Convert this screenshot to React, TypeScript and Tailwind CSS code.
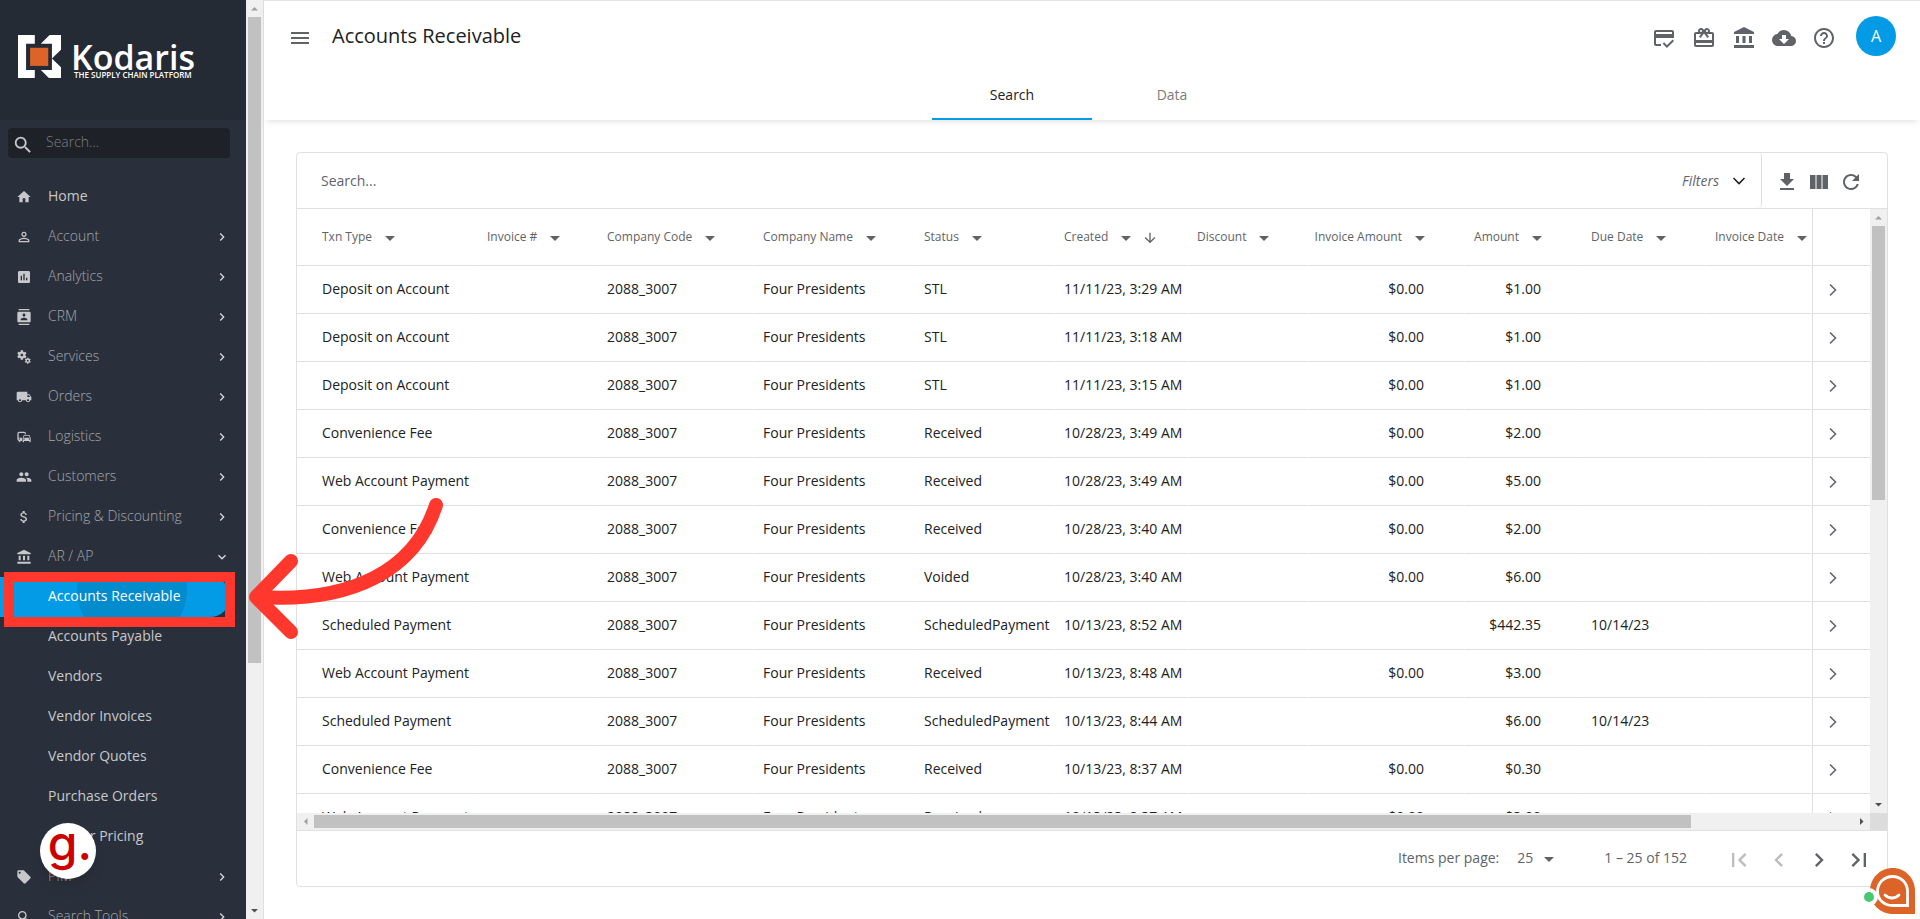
import React from 'react';
import {
  MdAccountBalance,
  MdArrowDownward,
  MdArrowDropDown,
  MdAssessment,
  MdAttachMoney,
  MdCardGiftcard,
  MdChevronLeft,
  MdChevronRight,
  MdCloudDownload,
  MdCommute,
  MdContacts,
  MdCreditScore,
  MdExpandMore,
  MdFileDownload,
  MdFirstPage,
  MdHelpOutline,
  MdHome,
  MdLastPage,
  MdLocalOffer,
  MdLocalShipping,
  MdMenu,
  MdMiscellaneousServices,
  MdPeople,
  MdPersonOutline,
  MdRefresh,
  MdSearch,
} from 'react-icons/md';

type Icon = React.ComponentType<{ className?: string }>;

type NavEntry = {
  label: string;
  icon?: Icon;
  expand?: 'right' | 'down';
  active?: boolean;
};

const nav: NavEntry[] = [
  { label: 'Home', icon: MdHome },
  { label: 'Account', icon: MdPersonOutline, expand: 'right' },
  { label: 'Analytics', icon: MdAssessment, expand: 'right' },
  { label: 'CRM', icon: MdContacts, expand: 'right' },
  { label: 'Services', icon: MdMiscellaneousServices, expand: 'right' },
  { label: 'Orders', icon: MdLocalShipping, expand: 'right' },
  { label: 'Logistics', icon: MdCommute, expand: 'right' },
  { label: 'Customers', icon: MdPeople, expand: 'right' },
  { label: 'Pricing & Discounting', icon: MdAttachMoney, expand: 'right' },
  { label: 'AR / AP', icon: MdAccountBalance, expand: 'down' },
  { label: 'Accounts Receivable', active: true },
  { label: 'Accounts Payable' },
  { label: 'Vendors' },
  { label: 'Vendor Invoices' },
  { label: 'Vendor Quotes' },
  { label: 'Purchase Orders' },
  { label: 'Vendor Pricing' },
  { label: 'PIM', icon: MdLocalOffer, expand: 'right' },
  { label: 'Search Tools', icon: MdSearch, expand: 'right' },
];

type Column = {
  title: string;
  width: string;
  right?: boolean;
  sorted?: boolean;
};

const columns: Column[] = [
  { title: 'Txn Type', width: 'w-[181px]' },
  { title: 'Invoice #', width: 'w-[120px]' },
  { title: 'Company Code', width: 'w-[156px]' },
  { title: 'Company Name', width: 'w-[161px]' },
  { title: 'Status', width: 'w-[140px]' },
  { title: 'Created', width: 'w-[133px]', sorted: true },
  { title: 'Discount', width: 'w-[120px]' },
  { title: 'Invoice Amount', width: 'w-[157px]', right: true },
  { title: 'Amount', width: 'w-[117px]', right: true },
  { title: 'Due Date', width: 'w-[124px]' },
  { title: 'Invoice Date', width: '' },
];

type Txn = {
  type: string;
  status: string;
  created: string;
  invoiceAmount?: string;
  amount: string;
  due?: string;
};

const rows: Txn[] = [
  { type: 'Deposit on Account', status: 'STL', created: '11/11/23, 3:29 AM', invoiceAmount: '$0.00', amount: '$1.00' },
  { type: 'Deposit on Account', status: 'STL', created: '11/11/23, 3:18 AM', invoiceAmount: '$0.00', amount: '$1.00' },
  { type: 'Deposit on Account', status: 'STL', created: '11/11/23, 3:15 AM', invoiceAmount: '$0.00', amount: '$1.00' },
  { type: 'Convenience Fee', status: 'Received', created: '10/28/23, 3:49 AM', invoiceAmount: '$0.00', amount: '$2.00' },
  { type: 'Web Account Payment', status: 'Received', created: '10/28/23, 3:49 AM', invoiceAmount: '$0.00', amount: '$5.00' },
  { type: 'Convenience Fee', status: 'Received', created: '10/28/23, 3:40 AM', invoiceAmount: '$0.00', amount: '$2.00' },
  { type: 'Web Account Payment', status: 'Voided', created: '10/28/23, 3:40 AM', invoiceAmount: '$0.00', amount: '$6.00' },
  { type: 'Scheduled Payment', status: 'ScheduledPayment', created: '10/13/23, 8:52 AM', amount: '$442.35', due: '10/14/23' },
  { type: 'Web Account Payment', status: 'Received', created: '10/13/23, 8:48 AM', invoiceAmount: '$0.00', amount: '$3.00' },
  { type: 'Scheduled Payment', status: 'ScheduledPayment', created: '10/13/23, 8:44 AM', amount: '$6.00', due: '10/14/23' },
  { type: 'Convenience Fee', status: 'Received', created: '10/13/23, 8:37 AM', invoiceAmount: '$0.00', amount: '$0.30' },
  { type: 'Web Account Payment', status: 'Received', created: '10/13/23, 8:37 AM', invoiceAmount: '$0.00', amount: '$3.00' },
];

const Logo = () => (
  <div className="flex h-[120px] shrink-0 bg-[#252b35] pl-[18px] pt-[35px] text-white">
    <svg viewBox="54 46 128 128" className="h-[43px] w-[43px]">
      <path d="M54 46H104V72H78V150H104V174H54Z" fill="#fff" />
      <path
        d="M122 72L148 46H182V90L155 116L182 142V174H146L122 150H155V72Z"
        fill="#fff"
      />
      <path d="M90 84H144V138H90Z" fill="#dc6428" />
    </svg>
    <div className="ml-[10px] pt-2">
      <div className="font-['Open_Sans'] text-[34px] font-semibold leading-7">
        Kodaris
      </div>
      <div className="ml-[3px] whitespace-nowrap font-['Open_Sans'] text-[8px] font-semibold leading-[8px]">
        THE SUPPLY CHAIN PLATFORM
      </div>
    </div>
  </div>
);

const Triangle = ({ dir, dim }: { dir: 'up' | 'down' | 'left' | 'right'; dim?: boolean }) => {
  const paths = {
    up: 'M5 10.5L8.5 7L12 10.5Z',
    down: 'M5 7L8.5 10.5L12 7Z',
    left: 'M10.5 5L7 8.5L10.5 12Z',
    right: 'M7 5L10.5 8.5L7 12Z',
  };
  return (
    <svg viewBox="0 0 17 17" className="h-[17px] w-[17px] shrink-0">
      <path d={paths[dir]} fill={dim ? '#a0a0a0' : '#505050'} />
    </svg>
  );
};

const NavItem = ({ label, icon: ItemIcon, expand, active }: NavEntry) => (
  <li className="relative h-10">
    <a
      href="#"
      className={`relative flex h-10 w-[230px] items-center overflow-hidden text-sm ${
        active ? 'rounded-r-[20px] bg-[#039be5] text-white' : ''
      } ${expand ? 'font-light text-[#a3a7ad]' : 'text-[#c6c8cb]'}`}
    >
      {active && (
        <span className="absolute -top-[42px] left-[77px] h-[110px] w-[110px] rounded-full bg-black/10" />
      )}
      <span className="flex w-12 shrink-0 pl-4">
        {ItemIcon && <ItemIcon className="h-4 w-4 text-[#c6c8cb]" />}
      </span>
      <span className="relative flex-1 pb-[2px] leading-5">{label}</span>
      {expand === 'right' && (
        <MdChevronRight className="h-4 w-4 text-[#d6d7d9]" />
      )}
      {expand === 'down' && <MdExpandMore className="h-4 w-4 text-[#d6d7d9]" />}
    </a>
    {active && (
      <span className="absolute -top-[5px] left-1 z-10 h-[55px] w-[231px] border-[10px] border-[#ff372c]" />
    )}
  </li>
);

const Sidebar = () => (
  <aside className="flex h-screen w-[246px] shrink-0 flex-col overflow-hidden bg-[#2a303b]">
    <Logo />
    <label className="ml-2 mt-2 flex h-[30px] w-[222px] shrink-0 items-center rounded bg-[#1e2127]">
      <MdSearch className="ml-1 mt-1 h-[22px] w-[22px] text-[#c6c8cb]" />
      <input
        aria-label="Search menu"
        placeholder="Search..."
        className="ml-3 w-40 bg-transparent pb-[2px] text-sm font-light text-white outline-none placeholder:text-[#7b7e82]"
      />
    </label>
    <ul className="mt-[19px]">
      {nav.map((item) => (
        <NavItem key={item.label} {...item} />
      ))}
    </ul>
  </aside>
);

const PageScrollbar = () => (
  <div className="flex h-screen w-[18px] shrink-0 flex-col border-r border-[#e0e0e0] bg-[#f0f0f0]">
    <Triangle dir="up" dim />
    <div className="flex flex-1 flex-col">
      <div className="ml-[2px] h-[73%] w-[13px] bg-[#c1c1c1]" />
    </div>
    <Triangle dir="down" />
  </div>
);

const headerIcons: { label: string; icon: Icon }[] = [
  { label: 'Payments', icon: MdCreditScore },
  { label: 'Rewards', icon: MdCardGiftcard },
  { label: 'Bank', icon: MdAccountBalance },
  { label: 'Downloads', icon: MdCloudDownload },
  { label: 'Help', icon: MdHelpOutline },
];

const Header = () => (
  <header className="relative flex h-[120px] shrink-0 flex-col border-t border-[#e4e4e4] bg-white shadow-[0_4px_6px_-3px_rgba(0,0,0,0.14)]">
    <div className="flex h-[70px] items-center pl-6 pr-6">
      <button aria-label="Menu" className="mt-1">
        <MdMenu className="h-6 w-6 text-[#5f6368]" />
      </button>
      <h1 className="ml-5 flex-1 text-xl text-[#202124]">Accounts Receivable</h1>
      <div className="mt-[3px] flex gap-4 text-[#5f6368]">
        {headerIcons.map(({ label, icon: HeaderIcon }) => (
          <button key={label} aria-label={label}>
            <HeaderIcon className="h-6 w-6" />
          </button>
        ))}
      </div>
      <button className="ml-5 h-10 w-10 rounded-full bg-[#039be5] text-base text-white">
        A
      </button>
    </div>
    <div className="flex flex-1 justify-center text-sm">
      <button className="w-40 border-b-2 border-[#039be5] text-[#202124]">
        Search
      </button>
      <button className="w-40 border-b-2 border-transparent text-[#7c7c7c]">
        Data
      </button>
    </div>
  </header>
);

const Toolbar = () => (
  <div className="flex h-[56px] shrink-0 border-b border-[#e0e0e0] text-[#5f6368]">
    <div className="flex flex-1 items-center rounded-r border-r border-[#e0e0e0] pl-6">
      <input
        aria-label="Search transactions"
        placeholder="Search..."
        className="flex-1 text-sm outline-none placeholder:text-[#5f6368]"
      />
      <button className="mr-[10px] flex items-center text-sm italic">
        Filters
        <svg viewBox="0 0 24 24" className="ml-2 h-6 w-6 text-[#202124]">
          <path d="M6.500 9L12 14.500L17.500 9" fill="none" stroke="currentColor" strokeWidth="1.600" />
        </svg>
      </button>
    </div>
    <div className="flex items-center gap-2 pl-[13px] pr-6 pt-[2px]">
      <button aria-label="Download">
        <MdFileDownload className="h-6 w-6" />
      </button>
      <button aria-label="Columns">
        <svg viewBox="0 0 24 24" className="h-6 w-6" fill="currentColor">
          <path d="M9.500 19h5V5h-5v14zM3 19h5.500V5H3v14zM15.500 5v14H21V5h-5.500z" />
        </svg>
      </button>
      <button aria-label="Refresh">
        <MdRefresh className="h-6 w-6" />
      </button>
    </div>
  </div>
);

const cell = 'border-b border-r border-b-[#e0e0e0] border-r-white pb-[2px] pl-[9px] first:pl-[25px]';

const Table = () => (
  <table className="w-full table-fixed border-separate border-spacing-0 whitespace-nowrap text-sm text-[#202124]">
    <thead>
      <tr className="h-[57px] text-xs text-[#5f6368]">
        {columns.map(({ title, width, right, sorted }) => (
          <th key={title} className={`${cell} ${width} ${right ? 'pr-[32px]' : ''} font-normal`}>
            <div className={`flex items-center pt-1 ${right ? 'justify-end' : ''}`}>
              <span className="pb-[2px]">{title}</span>
              <MdArrowDropDown className="ml-[6px] h-6 w-6 shrink-0" />
              {sorted && <MdArrowDownward className="ml-1 h-4 w-4 shrink-0" />}
            </div>
          </th>
        ))}
        <th aria-label="Open" className="w-[58px] border-b border-l border-[#e0e0e0]" />
      </tr>
    </thead>
    <tbody>
      {rows.map((row, i) => (
        <tr key={i} className="h-12">
          <td className={cell}>{row.type}</td>
          <td className={cell} />
          <td className={cell}>2088_3007</td>
          <td className={cell}>Four Presidents</td>
          <td className={cell}>{row.status}</td>
          <td className={cell}>{row.created}</td>
          <td className={cell} />
          <td className={`${cell} pr-10 text-right`}>{row.invoiceAmount}</td>
          <td className={`${cell} pr-10 text-right`}>{row.amount}</td>
          <td className={cell}>{row.due}</td>
          <td className={cell} />
          <td className="border-b border-l border-[#e0e0e0] pl-2">
            <button aria-label="Open row" className="block">
              <svg viewBox="0 0 24 24" className="h-6 w-6">
                <path d="M9 6.500L14.500 12L9 17.500" fill="none" stroke="#5f6368" strokeWidth="1.500" />
              </svg>
            </button>
          </td>
        </tr>
      ))}
    </tbody>
  </table>
);

const Paginator = () => (
  <div className="flex h-[56px] shrink-0 items-center justify-end border-t border-[#e0e0e0] pr-[14px] text-sm text-[#5f6368]">
    <label htmlFor="page-size" className="pb-[2px]">
      Items per page:
    </label>
    <div className="relative ml-[18px] mr-[43px] pb-[2px]">
      <select id="page-size" className="w-11 appearance-none bg-transparent outline-none">
        <option>25</option>
      </select>
      <MdArrowDropDown className="pointer-events-none absolute -top-[1px] right-0 h-6 w-6" />
    </div>
    <span className="mr-[38px] pb-[2px]">1 – 25 of 152</span>
    <div className="flex gap-3 pt-[2px]">
      <button aria-label="First page" className="text-[#bdbdbd]">
        <MdFirstPage className="h-7 w-7" />
      </button>
      <button aria-label="Previous page" className="text-[#bdbdbd]">
        <MdChevronLeft className="h-7 w-7" />
      </button>
      <button aria-label="Next page">
        <MdChevronRight className="h-7 w-7" />
      </button>
      <button aria-label="Last page">
        <MdLastPage className="h-7 w-7" />
      </button>
    </div>
  </div>
);

const Card = () => (
  <section className="flex min-h-0 flex-1 flex-col rounded border border-[#e0e0e0] bg-white">
    <Toolbar />
    <div className="flex min-h-0 flex-1">
      <div className="min-w-0 flex-1 overflow-hidden">
        <Table />
      </div>
      <div className="flex w-[17px] shrink-0 flex-col bg-[#f0f0f0]">
        <Triangle dir="up" dim />
        <div className="flex-1">
          <div className="ml-[2px] h-[48%] w-[13px] bg-[#c1c1c1]" />
        </div>
        <Triangle dir="down" />
      </div>
    </div>
    <div className="flex h-[17px] shrink-0 bg-[#f0f0f0]">
      <Triangle dir="left" dim />
      <div className="flex flex-1 items-center">
        <div className="h-[13px] w-[89.5%] bg-[#c1c1c1]" />
      </div>
      <Triangle dir="right" />
      <div className="w-[17px] bg-[#dcdcdc]" />
    </div>
    <Paginator />
  </section>
);

const Arrow = () => (
  <svg
    viewBox="0 0 200 150"
    className="pointer-events-none absolute left-[246px] top-[495px] h-[150px] w-[200px]"
    fill="none"
    stroke="#ff372c"
    strokeWidth="14"
    strokeLinecap="round"
    strokeLinejoin="round"
  >
    <path d="M190 10C169 76 105 108 12 102" />
    <path d="M45 66L10 102L45 137" />
  </svg>
);

const Chat = () => (
  <button aria-label="Chat" className="absolute bottom-[5px] right-[5px]">
    <svg viewBox="0 0 54 46" className="h-[46px] w-[54px]">
      <path d="M32 0C44 0 54 10 54 23V46H32C19 46 9 36 9 23C9 10 19 0 32 0Z" fill="#dc6428" />
      <circle cx="8" cy="29" r="9" fill="#fff" />
      <circle cx="8" cy="29" r="5" fill="#48c96f" />
      <path
        d="M31.500 8.500C40 8.500 46.500 15 46.500 23.500V37.500H31.500C23 37.500 16.500 31.500 16.500 23.500C16.500 15 23 8.500 31.500 8.500Z"
        fill="none"
        stroke="#fff"
        strokeWidth="2.800"
      />
      <path d="M24 27C28 31 34 31 38 27" fill="none" stroke="#fff" strokeWidth="2.800" strokeLinecap="round" />
    </svg>
  </button>
);

const GuideBadge = () => (
  <button className="absolute bottom-10 left-10 h-14 w-14 rounded-full bg-white pb-4 pl-1 font-['Inter'] text-5xl font-medium leading-9 text-[#cc0000] shadow-lg">
    g.
  </button>
);

const App = () => {
  return (
    <div className="relative flex h-screen overflow-hidden bg-white font-['Open_Sans',sans-serif]">
      <Sidebar />
      <PageScrollbar />
      <main className="flex min-w-0 flex-1 flex-col">
        <Header />
        <div className="flex min-h-0 flex-1 flex-col p-8">
          <Card />
        </div>
      </main>
      <Arrow />
      <GuideBadge />
      <Chat />
    </div>
  );
};

export default App;
